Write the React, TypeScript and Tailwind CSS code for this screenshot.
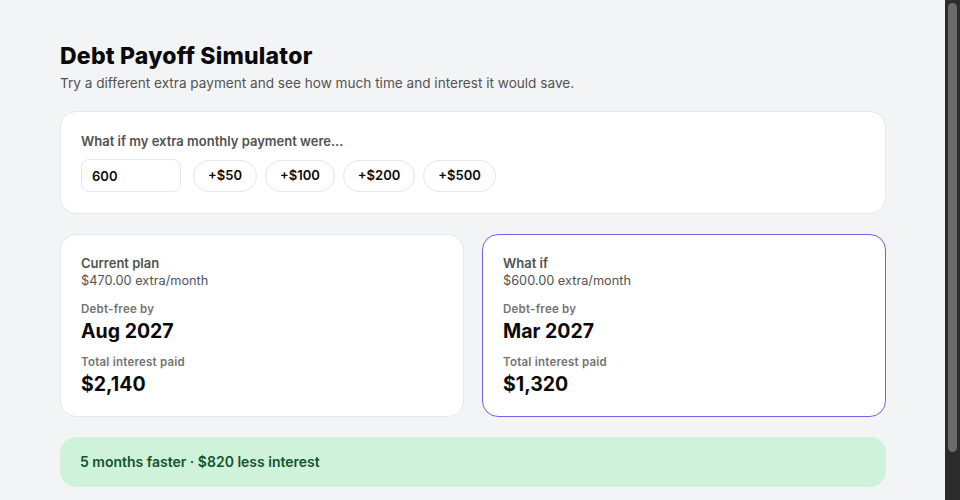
import { useState } from 'react'

const PRESETS = [50, 100, 200, 500]

function PlanCard({ title, extra, date, interest, active }: { title: string; extra: string; date: string; interest: string; active?: boolean }) {
  return (
    <div className={`bg-white rounded-2xl border px-5 pt-[19px] pb-[18px] ${active ? 'border-[#7b5ce8]' : 'border-gray-200'}`}>
      <div className="text-[13px] font-semibold text-neutral-600 leading-[18px]">{title}</div>
      <div className="text-[12.75px] text-neutral-600 leading-[18px]">{extra}</div>
      <div className="mt-[11px] text-[11.5px] font-semibold text-neutral-500 tracking-[0.02em] leading-4">Debt-free by</div>
      <div className="text-[19.5px] font-bold text-neutral-950 leading-7">{date}</div>
      <div className="mt-[9px] text-[11.5px] font-semibold text-neutral-500 tracking-[0.02em] leading-4">Total interest paid</div>
      <div className="text-[19.5px] font-bold text-neutral-950 leading-7">{interest}</div>
    </div>
  )
}

export default function App() {
  const [extra, setExtra] = useState('600')

  return (
    <div className="h-[500px] flex bg-[#f3f4f6] font-['Inter',sans-serif] text-neutral-900">
      <main className="flex-1 min-w-0 overflow-hidden pl-[60px] pr-[59px] pt-[40px] pb-[60px]">
        <h1 className="text-[23px] font-extrabold leading-8 tracking-[0.01em] text-neutral-950">Debt Payoff Simulator</h1>
        <p className="mt-[1px] text-[13.6px] text-neutral-600">Try a different extra payment and see how much time and interest it would save.</p>

        <div className="mt-[18px] bg-white rounded-2xl border border-gray-200 px-5 pt-[20px] pb-[21px]">
          <div className="text-[13px] font-semibold text-neutral-600 leading-[18px]">What if my extra monthly payment were...</div>
          <div className="mt-[9px] flex items-center">
            <input
              value={extra}
              onChange={e => setExtra(e.target.value)}
              className="w-[100px] h-[33px] rounded-lg border border-gray-200 px-[10px] text-[13px] font-semibold text-neutral-950 outline-none"
            />
            <div className="ml-[12px] flex gap-2">
              {PRESETS.map(p => (
                <button
                  key={p}
                  onClick={() => setExtra(String(Number(extra || 0) + p))}
                  className="h-[32px] px-[14px] rounded-full border border-gray-200 bg-white text-[13px] font-semibold text-neutral-950"
                >
                  +${p}
                </button>
              ))}
            </div>
          </div>
        </div>

        <div className="mt-5 grid grid-cols-2 gap-[18px]">
          <PlanCard title="Current plan" extra="$470.00 extra/month" date="Aug 2027" interest="$2,140" />
          <PlanCard title="What if" extra="$600.00 extra/month" date="Mar 2027" interest="$1,320" active />
        </div>

        <div className="mt-5 rounded-2xl bg-[#cff2da] px-5 py-[15px] text-sm font-semibold text-[#14532d] leading-5">
          5 months faster · $820 less interest
        </div>
      </main>

      {/* scrollbar as it appears in the window */}
      <div className="w-[15px] shrink-0 bg-[#2c2c2c] pt-[3px] pb-[48px] pl-[3px] pr-[3px]">
        <div className="h-full rounded-full bg-[#6b6b6b]" />
      </div>
    </div>
  )
}
